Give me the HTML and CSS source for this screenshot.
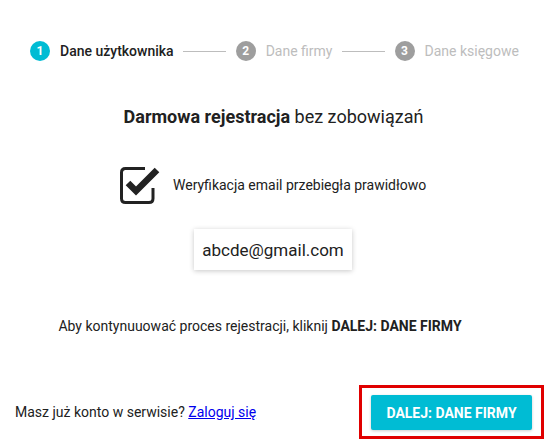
FILE: index.html
```html
<!DOCTYPE html>
<html lang="pl">
<head>
<meta charset="utf-8">
<link rel="stylesheet" href="styles.css">
</head>
<body>
<div class="page">
  <div class="stepper">
    <div class="step active"><span class="num">1</span><span class="label">Dane użytkownika</span></div>
    <div class="line"></div>
    <div class="step"><span class="num">2</span><span class="label">Dane firmy</span></div>
    <div class="line"></div>
    <div class="step"><span class="num">3</span><span class="label">Dane księgowe</span></div>
  </div>

  <h1 class="title"><strong>Darmowa rejestracja</strong> bez zobowiązań</h1>

  <div class="verify">
    <svg class="check" width="42" height="38" viewBox="0 0 42 38">
      <path d="M26 2.5 H6.5 Q2.5 2.5 2.5 6.5 V32.5 Q2.5 36.5 6.5 36.5 H30 Q34 36.5 34 32.5 V22" fill="none" stroke="#222" stroke-width="3"/>
      <path d="M9 17 L17 25 L38 4" fill="none" stroke="#222" stroke-width="6.5" stroke-linejoin="miter"/>
    </svg>
    <span class="verify-text">Weryfikacja email przebiegła prawidłowo</span>
  </div>

  <div class="email-wrap"><div class="email">abcde@gmail.com</div></div>

  <p class="hint">Aby kontynuuować proces rejestracji, kliknij <strong>DALEJ: DANE FIRMY</strong></p>

  <div class="footer">
    <span class="login">Masz już konto w serwisie? <a href="#">Zaloguj się</a></span>
    <div class="highlight"><button class="next">DALEJ: DANE FIRMY</button></div>
  </div>
</div>
</body>
</html>
```

FILE: styles.css
```css
html, body {
  margin: 0;
  padding: 0;
  background: #fff;
}
body {
  font-family: Roboto, "Noto Sans", sans-serif;
  color: #212121;
  width: 547px;
  height: 443px;
  overflow: hidden;
}
.page {
  display: flex;
  flex-direction: column;
}
.stepper {
  display: flex;
  align-items: center;
  padding: 41px 0 0 30px;
  height: 20px;
}
.step {
  display: flex;
  align-items: center;
  gap: 10px;
}
.num {
  width: 20px;
  height: 20px;
  border-radius: 50%;
  background: #9e9e9e;
  color: #fff;
  font-size: 12px;
  font-weight: 700;
  display: flex;
  align-items: center;
  justify-content: center;
}
.label {
  font-size: 14px;
  color: #bdbdbd;
}
.step.active .num {
  background: #00bcd4;
}
.step.active .label {
  color: #212121;
  font-weight: 500;
}
.line {
  width: 43px;
  height: 1px;
  background: #bdbdbd;
  margin: 1px 10px 0 9px;
}
.title {
  margin: 44px 0 0;
  text-align: center;
  font-size: 18px;
  font-weight: 400;
  line-height: 24px;
}
.title strong {
  font-weight: 700;
}
.verify {
  display: flex;
  align-items: center;
  margin: 37px 0 0 119px;
  gap: 12px;
}
.check {
  display: block;
}
.verify-text {
  font-size: 14px;
}
.email-wrap {
  display: flex;
  justify-content: center;
  margin-top: 25px;
}
.email {
  margin-right: 1px;
  width: 158px;
  height: 41px;
  box-sizing: border-box;
  display: flex;
  align-items: center;
  justify-content: center;
  font-size: 17px;
  background: #fff;
  box-shadow: 0 1px 5px rgba(0,0,0,0.22);
}
.hint {
  margin: 47px 0 0;
  padding-right: 27px;
  text-align: center;
  font-size: 14px;
  line-height: 18px;
}
.hint strong {
  font-weight: 700;
}
.footer {
  margin-top: 50px;
  display: flex;
  align-items: center;
  justify-content: space-between;
  padding: 0 3px 0 15px;
}
.login {
  font-size: 14px;
}
.login a {
  color: #0000ee;
}
.highlight {
  border: 3px solid #e00000;
  padding: 7px 9px 6px 9px;
}
.next {
  display: block;
  width: 161px;
  height: 35px;
  border: none;
  border-radius: 2px;
  background: #00bcd4;
  color: #fff;
  font-family: Roboto, sans-serif;
  font-size: 14px;
  font-weight: 700;
  box-shadow: 0 1px 3px rgba(0,0,0,0.2);
  padding: 0;
}
```
